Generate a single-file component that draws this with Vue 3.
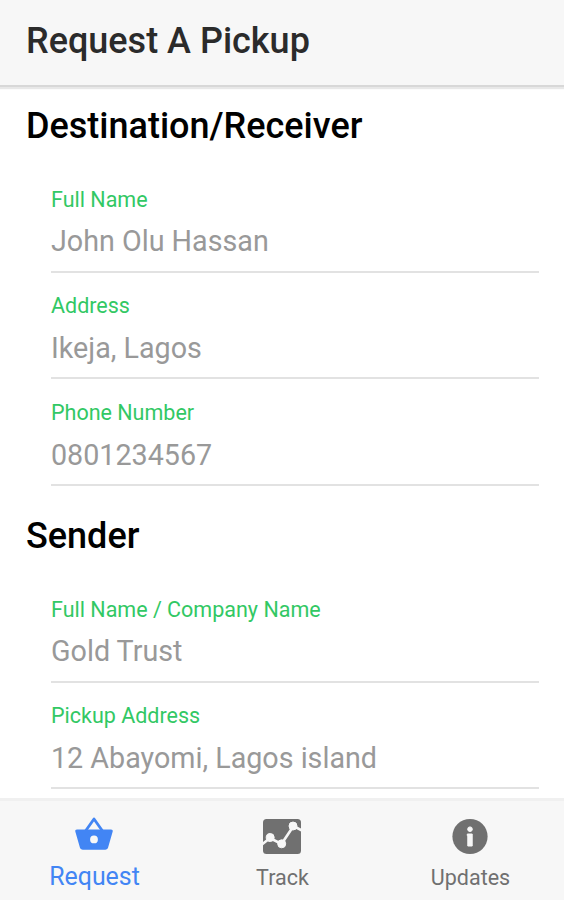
<script setup>
const sections = [
  {
    title: 'Destination/Receiver',
    fields: [
      { label: 'Full Name', value: 'John Olu Hassan' },
      { label: 'Address', value: 'Ikeja, Lagos' },
      { label: 'Phone Number', value: '0801234567' },
    ],
  },
  {
    title: 'Sender',
    fields: [
      { label: 'Full Name / Company Name', value: 'Gold Trust' },
      { label: 'Pickup Address', value: '12 Abayomi, Lagos island' },
    ],
  },
]
</script>

<template>
  <div class="screen">
    <header class="toolbar"><h1>Request A Pickup</h1></header>
    <main class="content">
      <section v-for="s in sections" :key="s.title" class="section">
        <h2>{{ s.title }}</h2>
        <div class="list">
          <div v-for="f in s.fields" :key="f.label" class="field">
            <div class="label">{{ f.label }}</div>
            <div class="value">{{ f.value }}</div>
          </div>
        </div>
      </section>
    </main>
    <nav class="tabs">
      <a class="tab active">
        <svg class="icon" viewBox="0 0 38 38">
          <path fill="none" stroke="currentColor" stroke-width="2.800" stroke-linejoin="round" d="M10.500 14 19 2 27.500 14" />
          <path fill="currentColor" fill-rule="evenodd" d="M2 12.500h34c1.300 0 2 .9 1.700 2l-4.600 16c-.4 1.400-1.500 2.200-2.900 2.200H7.800c-1.400 0-2.500-.8-2.900-2.200L.3 14.500c-.3-1.100.4-2 1.700-2ZM19 18.500a3.900 3.900 0 1 0 0 7.800 3.900 3.900 0 0 0 0-7.800Z" />
        </svg>
        <span>Request</span>
      </a>
      <a class="tab">
        <svg class="icon" viewBox="0 0 38 38">
          <rect x="0" y="2" width="38" height="35" rx="3.500" fill="currentColor" />
          <g class="cut">
            <path fill="none" stroke-width="2.600" d="M-1 27.500 7 21 18.500 27 30.500 9 39 13.500" />
            <circle cx="7.200" cy="20.500" r="4" />
            <circle cx="18.700" cy="26.800" r="4" />
            <circle cx="30" cy="9" r="4" />
          </g>
        </svg>
        <span>Track</span>
      </a>
      <a class="tab">
        <svg class="icon" viewBox="0 0 38 38">
          <circle cx="19" cy="19.500" r="17.600" fill="currentColor" />
          <circle class="cut" cx="19" cy="12.200" r="2.300" stroke="none" />
          <path class="cut" stroke="none" d="M16.300 17h4.900v12h-4.400V18.700h-.5z" />
        </svg>
        <span>Updates</span>
      </a>
    </nav>
  </div>
</template>

<style>
body { margin: 0; overflow: hidden; }
</style>

<style scoped>
.screen {
  display: flex;
  flex-direction: column;
  height: 900px;
  overflow: hidden;
  background: #fff;
  font-family: Roboto, sans-serif;
}
.toolbar {
  flex: none;
  box-sizing: border-box;
  height: 85px;
  padding-left: 26px;
  background: #f7f7f7;
  box-shadow: 0 2px 0 #d8d8d8, 0 4px 1px #e8e8e8;
  z-index: 1;
}
h1, h2 { margin: 0; font-weight: 480; font-size: 36px; white-space: nowrap; }
h1 { color: #2b2b2b; line-height: 83px; }
h2 { padding: 29.500px 0 20.500px 26px; line-height: 40px; color: #000; }
.content { flex: 1; min-height: 0; overflow: hidden; }
.section:first-child h2 { padding-top: 20.500px; }
.list { padding: 0 25px 0 51px; }
.field {
  box-sizing: border-box;
  height: 106.700px;
  padding-top: 20.700px;
  border-bottom: 2px solid #e2e2e2;
}
.label { font-size: 21.500px; line-height: 26px; color: #32c864; }
.value { margin-top: 8.500px; font-size: 28.700px; line-height: 40px; color: #999; }
.tabs {
  flex: none;
  display: grid;
  grid-template-columns: repeat(3, 1fr);
  box-sizing: border-box;
  height: 102px;
  border-top: 3px solid #f0f0f0;
  background: #f7f7f7;
}
.tab { display: flex; flex-direction: column; align-items: center; padding-top: 16px; color: #707070; font-size: 21.500px; }
.active { color: #4285f4; font-size: 24.900px; }
.icon { width: 38px; height: 38px; }
.tab span { margin: 8px 0 0 1px; line-height: 30px; }
.active span { margin-top: 7px; }
.cut { fill: #f7f7f7; stroke: #f7f7f7; }
</style>
